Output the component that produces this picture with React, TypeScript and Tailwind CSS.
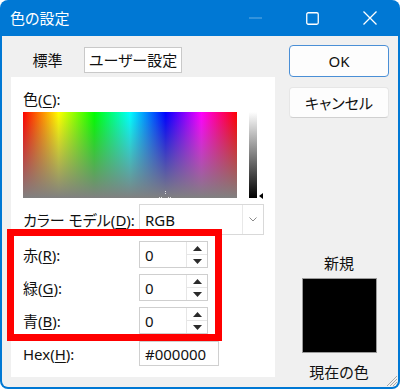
import React from "react";

const U = ({ c }: { c: string }) => (
  <span className="underline decoration-1 underline-offset-[2px]">{c}</span>
);

function Spin() {
  return (
    <div className="flex h-[27px] w-[69px] border border-[#cfcfcf] bg-white">
      <div className="flex flex-1 items-center pl-[5px]">0</div>
      <div className="flex w-[21px] flex-col border-l border-[#e6e6e6]">
        <div className="flex flex-1 items-center justify-center border-b border-[#e6e6e6]">
          <svg width="9" height="5" viewBox="0 0 9 5">
            <path d="M4.5 0 L9 5 H0 Z" fill="#2b2b2b" />
          </svg>
        </div>
        <div className="flex flex-1 items-center justify-center">
          <svg width="9" height="5" viewBox="0 0 9 5">
            <path d="M0 0 H9 L4.5 5 Z" fill="#2b2b2b" />
          </svg>
        </div>
      </div>
    </div>
  );
}

export default function App() {
  return (
    <div className="h-[389px] w-[400px] bg-white text-[15px] leading-[18px] text-[#111] [font-family:'Noto_Sans','Noto_Sans_CJK_JP',sans-serif] [font-feature-settings:'palt']">
      <div className="relative flex h-full w-full flex-col rounded-[8px] bg-[#0078d4]">
        {/* Title bar */}
        <div className="flex h-[36px] items-center pl-[10px] pr-[2px] text-white">
          <span className="text-[15px]">色の設定</span>
          <div className="ml-auto flex h-full items-center">
            <div className="flex h-full w-[57px] items-center justify-center">
              <svg width="13" height="2" viewBox="0 0 13 2">
                <line x1="0" y1="1" x2="13" y2="1" stroke="#ffffff" strokeOpacity="0.4" strokeWidth="1" />
              </svg>
            </div>
            <div className="flex h-full w-[57px] items-center justify-center">
              <svg width="13" height="13" viewBox="0 0 13 13">
                <rect x="0.75" y="0.75" width="11.5" height="11.5" rx="1.5" fill="none" stroke="#ffffff" strokeWidth="1.3" />
              </svg>
            </div>
            <div className="flex h-full w-[57px] items-center justify-center">
              <svg width="14" height="14" viewBox="0 0 14 14">
                <path d="M0.5 0.5 L13.5 13.5 M13.5 0.5 L0.5 13.5" stroke="#ffffff" strokeWidth="1.3" />
              </svg>
            </div>
          </div>
        </div>

        {/* Body */}
        <div className="relative mx-[2px] mb-[2px] flex flex-1 rounded-b-[6px] bg-[#f0f0f0]">
          {/* Left column */}
          <div className="ml-[9px] mt-[11px] flex w-[264px] flex-col">
            <div className="flex h-[26px]">
              <div className="flex w-[73px] items-center justify-center">標準</div>
              <div className="flex w-[98px] items-center justify-center border border-[#c9c9c9] bg-white">
                ユーザー設定
              </div>
            </div>
            <div className="mt-[4px] h-[300px] bg-white pl-[12px] pt-[13px]">
              <div className="h-[18px]">
                色(<U c="C" />):
              </div>
              <div className="mt-[4px] flex items-start">
                <div className="relative h-[86px] w-[214px] overflow-hidden bg-[linear-gradient(to_bottom,rgba(128,128,128,0),#808080),linear-gradient(to_right,#ff0000,#ffff00,#00ff00,#00ffff,#0000ff,#ff00ff,#ff0000)]">
                  <svg className="absolute left-[136px] top-[79px]" width="13" height="13" viewBox="0 0 13 13">
                    <path d="M6.5 0 V4 M6.5 9 V13 M0 6.5 H4 M9 6.5 H13" stroke="#e0e0e0" strokeWidth="1" strokeDasharray="1 1" />
                  </svg>
                </div>
                <div className="ml-[12px] h-[86px] w-[8px] bg-[linear-gradient(to_bottom,#ffffff,#000000)]" />
                <svg className="ml-[2px] mt-[81px]" width="4" height="6" viewBox="0 0 4 6">
                  <path d="M0 3 L4 0 V6 Z" fill="#000" />
                </svg>
              </div>

              <div className="mt-[5px] flex h-[31px] items-center">
                <div className="w-[116px]">
                  カラー モデル(<U c="D" />):
                </div>
                <div className="flex h-full w-[125px] items-center border border-[#d9d9d9] bg-white">
                  <span className="flex-1 pl-[5px]">RGB</span>
                  <div className="flex h-full w-[21px] items-center justify-center border-l border-[#e8e8e8]">
                    <svg width="8" height="5" viewBox="0 0 8 5">
                      <path d="M0.5 0.5 L4 4 L7.5 0.5" fill="none" stroke="#8a8a8a" strokeWidth="1" />
                    </svg>
                  </div>
                </div>
              </div>

              <div className="mt-[6px] flex flex-col gap-[6px]">
                <div className="flex items-center">
                  <div className="w-[116px]">
                    赤(<U c="R" />):
                  </div>
                  <Spin />
                </div>
                <div className="flex items-center">
                  <div className="w-[116px]">
                    緑(<U c="G" />):
                  </div>
                  <Spin />
                </div>
                <div className="flex items-center">
                  <div className="w-[116px]">
                    青(<U c="B" />):
                  </div>
                  <Spin />
                </div>
              </div>

              <div className="mt-[7px] flex items-center">
                <div className="w-[116px]">
                  Hex(<U c="H" />):
                </div>
                <div className="flex h-[25px] w-[80px] items-center border border-[#d0d0d0] bg-white pl-[5px]">
                  #000000
                </div>
              </div>
            </div>
          </div>

          {/* Right column */}
          <div className="ml-[14px] flex w-[100px] flex-col items-center pt-[9px]">
            <div className="flex h-[32px] w-[100px] items-center justify-center rounded-[4px] border border-[#4a8fd6] bg-[#fdfdfd]">
              OK
            </div>
            <div className="mt-[10px] flex h-[31px] w-[100px] items-center justify-center rounded-[4px] border border-[#e6e6e6] border-b-[#d0d0d0] bg-[#fdfdfd]">
              キャンセル
            </div>
            <div className="mt-[136px] h-[18px]">新規</div>
            <div className="mt-[6px] h-[75px] w-[75px] border border-[#9a9a9a] bg-black" />
            <div className="mt-[10px] h-[18px]">現在の色</div>
          </div>

          {/* Resize grip */}
          <svg className="absolute bottom-[1px] right-[1px]" width="11" height="11" viewBox="0 0 11 11">
            <path d="M11 1 L1 11 M11 4 L4 11 M11 7 L7 11" stroke="#a8a8a8" strokeWidth="1" />
          </svg>
        </div>

        {/* Red annotation box */}
        <div className="absolute left-[7px] top-[229px] h-[112px] w-[215px] border-[7px] border-[#ff0000]" />
      </div>
    </div>
  );
}
